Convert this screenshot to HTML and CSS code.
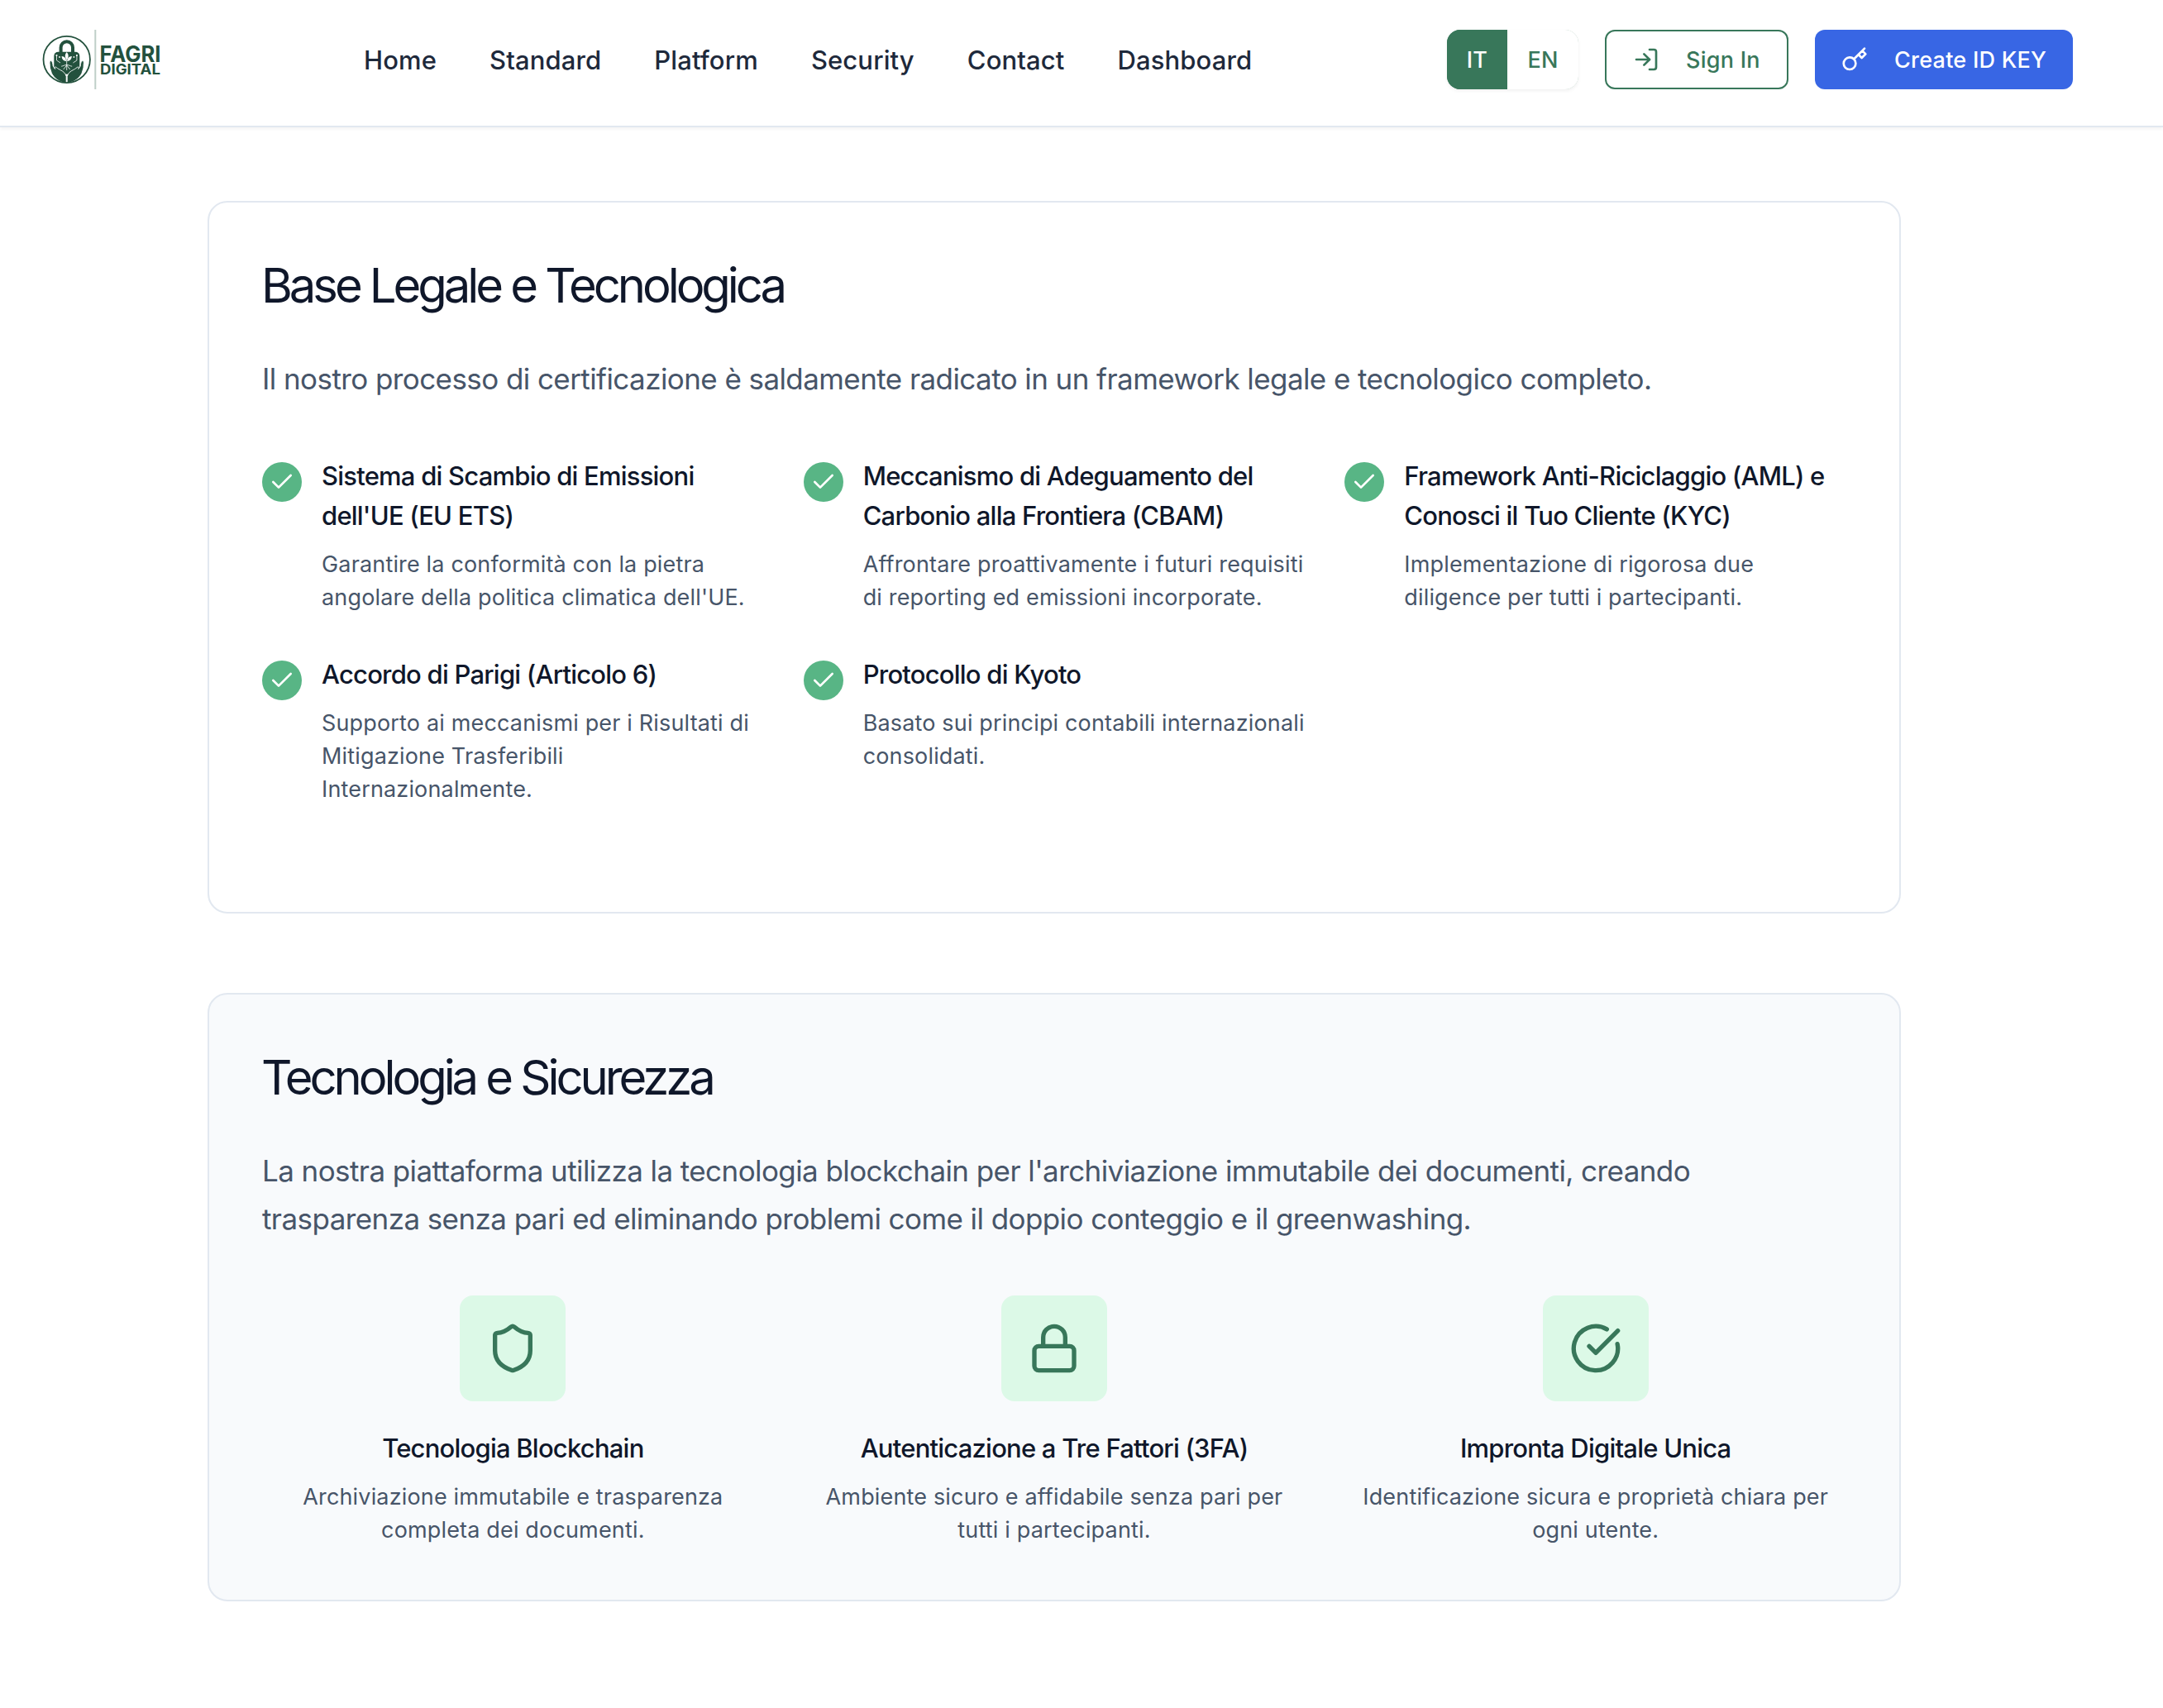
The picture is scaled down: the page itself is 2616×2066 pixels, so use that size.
FILE: index.html
```html
<!DOCTYPE html>
<html lang="it">
<head>
<meta charset="utf-8">
<title>Fagri Digital</title>
<link rel="stylesheet" href="styles.css">
</head>
<body>
<header class="header">
  <a class="logo" aria-label="Fagri Digital">
    <svg class="logo-svg" viewBox="0 0 152 72" width="152" height="72">
      <path d="M25.600 28v-6.500a7.200 7.200 0 0 1 14.400 0V28" fill="none" stroke="#23513d" stroke-width="4"/>
      <rect x="17.300" y="26.700" width="31" height="27" rx="5" fill="#23513d"/>
      <g fill="#23513d" stroke="#fff" stroke-width="0.900" stroke-linejoin="round">
        <path d="M32.200 64.500v-8c-1-4-4-6.500-7.500-8-2.500-1.200-4.300-3-5.500-3.500-1.500-.3-1.500 1.500-.5 2.500l-2.500-3.500c-.3-3-.8-6-2.600-6.500-1.800 0-1.700 2-1.400 4.500l.2 4 2 6.500c3 6 9 11 17.800 12z"/>
        <path d="M33.200 64.500v-8c1-4 4-6.500 7.500-8 2.500-1.200 4.300-3 5.500-3.500 1.500-.3 1.500 1.500.5 2.500l2.500-3.500c.3-3 .8-6 2.600-6.500 1.800 0 1.700 2 1.400 4.500l-.2 4-2 6.500c-3 6-9 11-17.800 12z"/>
      </g>
      <g fill="#fff">
        <path d="M32.700 27c2.600 3 2.600 6.500 0 9.500-2.600-3-2.600-6.500 0-9.500z"/>
        <path d="M26.500 32c3.400.2 5.400 2.500 5.700 6-3.700-.3-5.500-2.500-5.700-6zM38.900 32c-3.400.2-5.400 2.500-5.700 6 3.700-.3 5.500-2.500 5.700-6z"/>
        <circle cx="20.500" cy="31" r="1.100"/><circle cx="44.900" cy="31" r="1.100"/><circle cx="24" cy="33" r=".9"/><circle cx="41.400" cy="33" r=".9"/>
      </g>
      <path d="M32.700 36v13M32.700 42.500c-3 0-4 1.500-6.500 1.700M32.700 42.500c3 0 4 1.500 6.500 1.700M32.700 43l-4 5M32.700 43l4 5M20.500 31v6l4.500 3M44.900 31v6l-4.500 3" fill="none" stroke="#fff" stroke-width="0.800"/>
      <circle cx="32.700" cy="36" r="28.200" fill="none" stroke="#23513d" stroke-width="1.800"/>
      <rect x="66.300" y="0" width="2" height="72" fill="#bfcfc8"/>
      <text class="logo-name" x="72.500" y="38.500" textLength="74" lengthAdjust="spacingAndGlyphs">FAGRI</text>
      <text class="logo-sub" x="73" y="53.900" textLength="73" lengthAdjust="spacingAndGlyphs">DIGITAL</text>
    </svg>
  </a>
  <nav class="nav">
    <a>Home</a><a>Standard</a><a>Platform</a><a>Security</a><a>Contact</a><a>Dashboard</a>
  </nav>
  <div class="actions">
    <div class="lang"><button class="lang-btn lang-on">IT</button><button class="lang-btn">EN</button></div>
    <button class="btn btn-outline">
      <svg class="icon" viewBox="0 0 24 24"><path d="M15 3h4a2 2 0 0 1 2 2v14a2 2 0 0 1-2 2h-4"/><path d="M10 17l5-5-5-5"/><path d="M15 12H3"/></svg>
      <span class="btn-label">Sign In</span>
    </button>
    <button class="btn btn-primary">
      <svg class="icon" viewBox="0 0 24 24"><path d="M21 2l-2 2m-7.610 7.610a5.500 5.500 0 1 1-7.778 7.778 5.500 5.500 0 0 1 7.777-7.777zm0 0L15.500 7.500m0 0l3 3L22 7l-3-3m-3.500 3.500L19 4"/></svg>
      <span class="btn-label">Create ID KEY</span>
    </button>
  </div>
</header>
<main class="main">
  <section class="card">
    <h2>Base Legale e Tecnologica</h2>
    <p class="lead">Il nostro processo di certificazione è saldamente radicato in un framework legale e tecnologico completo.</p>
    <div class="grid checks">
      <div class="check"><span class="tick"><svg class="icon" viewBox="0 0 24 24"><path d="M20 6 9 17l-5-5"/></svg></span><div><h3>Sistema di Scambio di Emissioni<br>dell'UE (EU ETS)</h3><p class="desc">Garantire la conformità con la pietra<br>angolare della politica climatica dell'UE.</p></div></div>
      <div class="check"><span class="tick"><svg class="icon" viewBox="0 0 24 24"><path d="M20 6 9 17l-5-5"/></svg></span><div><h3>Meccanismo di Adeguamento del<br>Carbonio alla Frontiera (CBAM)</h3><p class="desc">Affrontare proattivamente i futuri requisiti<br>di reporting ed emissioni incorporate.</p></div></div>
      <div class="check"><span class="tick"><svg class="icon" viewBox="0 0 24 24"><path d="M20 6 9 17l-5-5"/></svg></span><div><h3>Framework Anti-Riciclaggio (AML) e<br>Conosci il Tuo Cliente (KYC)</h3><p class="desc">Implementazione di rigorosa due<br>diligence per tutti i partecipanti.</p></div></div>
      <div class="check"><span class="tick"><svg class="icon" viewBox="0 0 24 24"><path d="M20 6 9 17l-5-5"/></svg></span><div><h3>Accordo di Parigi (Articolo 6)</h3><p class="desc">Supporto ai meccanismi per i Risultati di<br>Mitigazione Trasferibili<br>Internazionalmente.</p></div></div>
      <div class="check"><span class="tick"><svg class="icon" viewBox="0 0 24 24"><path d="M20 6 9 17l-5-5"/></svg></span><div><h3>Protocollo di Kyoto</h3><p class="desc">Basato sui principi contabili internazionali<br>consolidati.</p></div></div>
    </div>
  </section>
  <section class="card card-tint">
    <h2>Tecnologia e Sicurezza</h2>
    <p class="lead">La nostra piattaforma utilizza la tecnologia blockchain per l'archiviazione immutabile dei documenti, creando<br>trasparenza senza pari ed eliminando problemi come il doppio conteggio e il greenwashing.</p>
    <div class="grid">
      <div class="feature"><span class="tile"><svg class="icon icon-lg" viewBox="0 0 24 24"><path d="M20 13c0 5-3.500 7.500-7.660 8.950a1 1 0 0 1-.67-.01C7.500 20.500 4 18 4 13V6a1 1 0 0 1 1-1c2 0 4.500-1.200 6.240-2.720a1.170 1.170 0 0 1 1.520 0C14.510 3.810 17 5 19 5a1 1 0 0 1 1 1z"/></svg></span><h3>Tecnologia Blockchain</h3><p class="desc">Archiviazione immutabile e trasparenza<br>completa dei documenti.</p></div>
      <div class="feature"><span class="tile"><svg class="icon icon-lg" viewBox="0 0 24 24"><rect x="3" y="11" width="18" height="11" rx="2"/><path d="M7 11V7a5 5 0 0 1 10 0v4"/></svg></span><h3>Autenticazione a Tre Fattori (3FA)</h3><p class="desc">Ambiente sicuro e affidabile senza pari per<br>tutti i partecipanti.</p></div>
      <div class="feature"><span class="tile"><svg class="icon icon-lg" viewBox="0 0 24 24"><path d="M21.801 10A10 10 0 1 1 17 3.335"/><path d="m9 11 3 3L22 4"/></svg></span><h3>Impronta Digitale Unica</h3><p class="desc">Identificazione sicura e proprietà chiara per<br>ogni utente.</p></div>
    </div>
  </section>
</main>
</body>
</html>
```
FILE: styles.css
```css
* { box-sizing: border-box; }

body {
  margin: 0;
  background: #fff;
  color: #0f172a;
  font-family: Inter, "Noto Sans", sans-serif;
  height: 2066px;
  overflow: hidden;
}

h2, h3, p { margin: 0; }

button {
  font: inherit;
  letter-spacing: inherit;
  border: 0;
  padding: 0;
}

.header {
  display: flex;
  align-items: flex-start;
  height: 154px;
  padding: 36px 109px 0 48px;
  border-bottom: 2px solid #e2e8f0;
  box-shadow: 0 2px 4px rgba(0, 0, 0, 0.05);
}

.logo { display: block; width: 392px; }
.logo-svg { display: block; }

.logo-name {
  font: 700 26.8px Inter, sans-serif;
  fill: #23513d;
}

.logo-sub {
  font: 700 17px Inter, sans-serif;
  fill: #23513d;
}

.nav {
  display: flex;
  gap: 64px;
  padding-top: 1px;
  font-size: 31px;
  font-weight: 500;
  line-height: 72px;
  letter-spacing: 0.12px;
  color: #1e293b;
}

.actions {
  display: flex;
  gap: 32px;
  margin-left: auto;
  font-size: 27px;
  font-weight: 500;
  line-height: 72px;
  letter-spacing: 0.25px;
}

.lang {
  display: flex;
  width: 159px;
  height: 72px;
  border-radius: 16px;
  overflow: hidden;
  background: linear-gradient(90deg, #38775a 50%, #c5d8ce 50%);
  box-shadow: 0 2px 4px rgba(0, 0, 0, 0.06);
}

.lang-btn {
  flex: 1;
  padding-top: 1px;
  border-radius: 0 16px 16px 0;
  background: #fff;
  color: #38775a;
}

.lang-on {
  flex: 0 0 73px;
  border-radius: 0;
  background: #38775a;
  color: #fff;
}

.btn {
  display: flex;
  align-items: center;
  gap: 32px;
  height: 72px;
  border-radius: 12px;
  white-space: nowrap;
}

.btn-label { padding-top: 1px; }

.btn-outline {
  width: 222px;
  padding-left: 32px;
  border: 2px solid #38775a;
  background: #fff;
  color: #38775a;
}

.btn-primary {
  width: 312px;
  padding-left: 32px;
  background: #3866e4;
  color: #fff;
}

.icon {
  display: block;
  flex: none;
  width: 32px;
  height: 32px;
  fill: none;
  stroke: currentColor;
  stroke-width: 2;
  stroke-linecap: round;
  stroke-linejoin: round;
}

.icon-lg {
  width: 64px;
  height: 64px;
}

.main {
  display: flex;
  flex-direction: column;
  gap: 96px;
  width: 2048px;
  margin: 89px 0 0 251px;
}

.card {
  padding: 64px;
  border: 2px solid #e2e8f0;
  border-radius: 24px;
  background: #fff;
}

.card-tint { background: #f8fafc; }

h2 {
  margin-left: -1px;
  font-size: 58px;
  font-weight: 400;
  line-height: 72px;
  letter-spacing: -4.08px;
}

.lead {
  margin: 48px 0 64px;
  font-size: 35px;
  line-height: 58px;
  letter-spacing: -0.58px;
  color: #475569;
  white-space: nowrap;
}

.grid {
  display: grid;
  grid-template-columns: repeat(3, 1fr);
  gap: 48px;
}

.checks { margin-bottom: 64px; }

.check {
  display: flex;
  gap: 24px;
}

.tick {
  display: grid;
  place-items: center;
  flex: none;
  width: 48px;
  height: 48px;
  margin-top: 8px;
  border-radius: 50%;
  background: #58b585;
  color: #fff;
}

h3 {
  padding-top: 1px;
  font-size: 31px;
  font-weight: 500;
  line-height: 48px;
  letter-spacing: -0.78px;
  white-space: nowrap;
}

.desc {
  margin-top: 15px;
  font-size: 27px;
  line-height: 40px;
  letter-spacing: 0.16px;
  color: #475569;
  white-space: nowrap;
}

.feature {
  display: flex;
  flex-direction: column;
  align-items: center;
  text-align: center;
}

.tile {
  display: grid;
  place-items: center;
  width: 128px;
  height: 128px;
  margin-bottom: 32px;
  border-radius: 16px;
  background: #dcf9e7;
  color: #38775a;
}
```
